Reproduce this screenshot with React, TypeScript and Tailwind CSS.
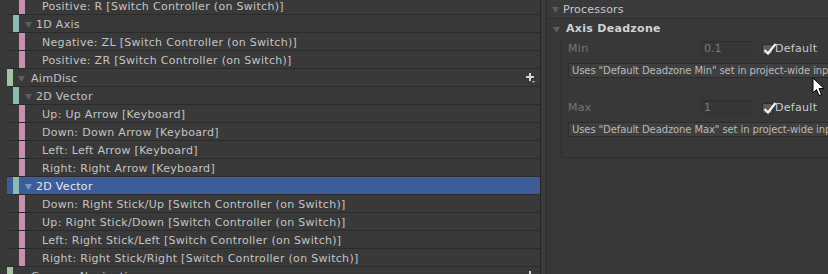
import React from 'react';

type Row = { k: 'a' | 'c' | 'b'; t: string; sel?: boolean };

const rows: Row[] = [
  { k: 'b', t: 'Positive: R [Switch Controller (on Switch)]' },
  { k: 'c', t: '1D Axis' },
  { k: 'b', t: 'Negative: ZL [Switch Controller (on Switch)]' },
  { k: 'b', t: 'Positive: ZR [Switch Controller (on Switch)]' },
  { k: 'a', t: 'AimDisc' },
  { k: 'c', t: '2D Vector' },
  { k: 'b', t: 'Up: Up Arrow [Keyboard]' },
  { k: 'b', t: 'Down: Down Arrow [Keyboard]' },
  { k: 'b', t: 'Left: Left Arrow [Keyboard]' },
  { k: 'b', t: 'Right: Right Arrow [Keyboard]' },
  { k: 'c', t: '2D Vector', sel: true },
  { k: 'b', t: 'Down: Right Stick/Up [Switch Controller (on Switch)]' },
  { k: 'b', t: 'Up: Right Stick/Down [Switch Controller (on Switch)]' },
  { k: 'b', t: 'Left: Right Stick/Left [Switch Controller (on Switch)]' },
  { k: 'b', t: 'Right: Right Stick/Right [Switch Controller (on Switch)]' },
  { k: 'a', t: 'Camera Navigation' },
];

const Tri = ({ light }: { light?: boolean }) => (
  <svg width="7" height="6" viewBox="0 0 7 6" className="shrink-0">
    <path d="M0 0 H7 L3.5 6 Z" fill={light ? '#7d97c8' : '#5e5e5e'} />
  </svg>
);

const Plus = () => (
  <svg width="9" height="10" viewBox="0 0 9 10" className="absolute right-[5px] top-[4px]">
    <path d="M3 0 H5 V3 H8 V5 H5 V8 H3 V5 H0 V3 H3 Z" fill="#d6d6d6" />
    <path d="M6 8 H9 L7.5 10 Z" fill="#bdbdbd" />
  </svg>
);

const Check = () => (
  <div className="relative w-[11px] h-[11px] bg-[#5a5a5a] border border-[#2a2a2a] rounded-[2px] shrink-0">
    <svg width="14" height="13" viewBox="0 0 14 13" className="absolute left-[0px] top-[-2px]">
      <path d="M1.5 7 L5 10.5 L12.5 1" stroke="#f2f2f2" strokeWidth="2.2" fill="none" />
    </svg>
  </div>
);

function TreeRow({ r }: { r: Row }) {
  return (
    <div className="flex h-[18px]">
      <div className="w-[7px] shrink-0" />
      <div
        className={`relative flex-1 flex items-stretch border-b border-[#2b2b2b] ${
          r.sel ? 'bg-[#3c5d99]' : ''
        }`}
      >
        {r.k === 'a' && (
          <>
            <div className="w-[6px] bg-[#a3c59f] shrink-0" />
            <div className="w-[5px] shrink-0" />
            <div className="flex items-center pt-[2px]">
              <Tri />
            </div>
            <div className="w-[6px] shrink-0" />
          </>
        )}
        {r.k === 'c' && (
          <>
            <div className="w-[6px] shrink-0" />
            <div className="w-[6px] bg-[#8bb9b3] shrink-0" />
            <div className="w-[6px] shrink-0" />
            <div className="flex items-center pt-[2px]">
              <Tri light={r.sel} />
            </div>
            <div className="w-[4px] shrink-0" />
          </>
        )}
        {r.k === 'b' && (
          <>
            <div className="w-[12px] shrink-0" />
            <div className="w-[6px] bg-[#c690ae] shrink-0" />
            <div className="w-[17px] shrink-0" />
          </>
        )}
        <div
          className={`flex items-center pt-[3px] text-[11px] tracking-[0.3px] whitespace-nowrap ${
            r.sel ? 'text-[#e4e8f0]' : 'text-[#c4c4c4]'
          }`}
        >
          {r.t}
        </div>
        {r.k === 'a' && <Plus />}
      </div>
    </div>
  );
}

function HelpBox({ text }: { text: string }) {
  return (
    <div className="ml-[6px] h-[15px] bg-[#3f3f3f] border border-[#2c2c2c] border-r-0 flex items-center pl-[3px] text-[10px] tracking-[-0.1px] text-[#b9b9b9] whitespace-nowrap overflow-hidden">
      {text}
    </div>
  );
}

function Field({ label, value }: { label: string; value: string }) {
  return (
    <div className="flex items-center h-[16px]">
      <div className="w-[138px] shrink-0 pl-[6px] text-[11px] tracking-[0.3px] text-[#767676]">{label}</div>
      <div className="w-[53px] h-[16px] shrink-0 bg-[#363636] border-t border-[#2e2e2e] flex items-center pl-[4px] text-[11px] text-[#7c7c7c]">
        {value}
      </div>
      <div className="w-[9px] shrink-0" />
      <Check />
      <div className="pl-[2px] text-[11px] tracking-[0.3px] text-[#cacaca] whitespace-nowrap">Default</div>
    </div>
  );
}

export default function App() {
  return (
    <div
      className="w-[828px] h-[274px] overflow-hidden flex bg-[#383838] relative"
      style={{ fontFamily: '"DejaVu Sans", Verdana, sans-serif' }}
    >
      {/* bindings tree */}
      <div className="w-[540px] shrink-0 overflow-hidden bg-[#393939]">
        <div className="mt-[-3px]">
          {rows.map((r, i) => (
            <TreeRow key={i} r={r} />
          ))}
        </div>
      </div>

      {/* splitter */}
      <div className="w-[7px] shrink-0 flex">
        <div className="w-px bg-[#262626]" />
        <div className="flex-1 bg-[#3b3b3b]" />
        <div className="w-px bg-[#2a2a2a]" />
      </div>

      {/* properties */}
      <div className="flex-1 flex flex-col overflow-hidden">
        <div className="h-[19px] flex items-center pt-[2px] border-b border-[#2d2d2d] bg-[#3a3a3a]">
          <div className="w-[5px]" />
          <Tri />
          <div className="pl-[4px] text-[11px] tracking-[0.2px] text-[#c8c8c8] whitespace-nowrap">Processors</div>
        </div>
        <div className="h-[19px] flex items-center pt-[2px]">
          <div className="w-[6px]" />
          <Tri />
          <div className="pl-[6px] text-[11px] tracking-[0.3px] font-bold text-[#d2d2d2] whitespace-nowrap">Axis Deadzone</div>
        </div>
        <div className="ml-[14px] h-[120px] border-l border-b border-[#2e2e2e] flex flex-col">
          <div className="h-[3px]" />
          <Field label="Min" value="0.1" />
          <div className="h-[6px]" />
          <HelpBox text={'Uses "Default Deadzone Min" set in project-wide input settings.'} />
          <div className="h-[22px]" />
          <Field label="Max" value="1" />
          <div className="h-[6px]" />
          <HelpBox text={'Uses "Default Deadzone Max" set in project-wide input settings.'} />
        </div>
      </div>

      {/* mouse cursor */}
      <svg width="13" height="20" viewBox="0 0 13 20" className="absolute left-[812px] top-[77px]">
        <path d="M1 1 V16 L4.5 12.5 L7 18.5 L9.5 17.5 L7 11.5 H12 Z" fill="#ffffff" stroke="#000000" strokeWidth="1" />
      </svg>
    </div>
  );
}
